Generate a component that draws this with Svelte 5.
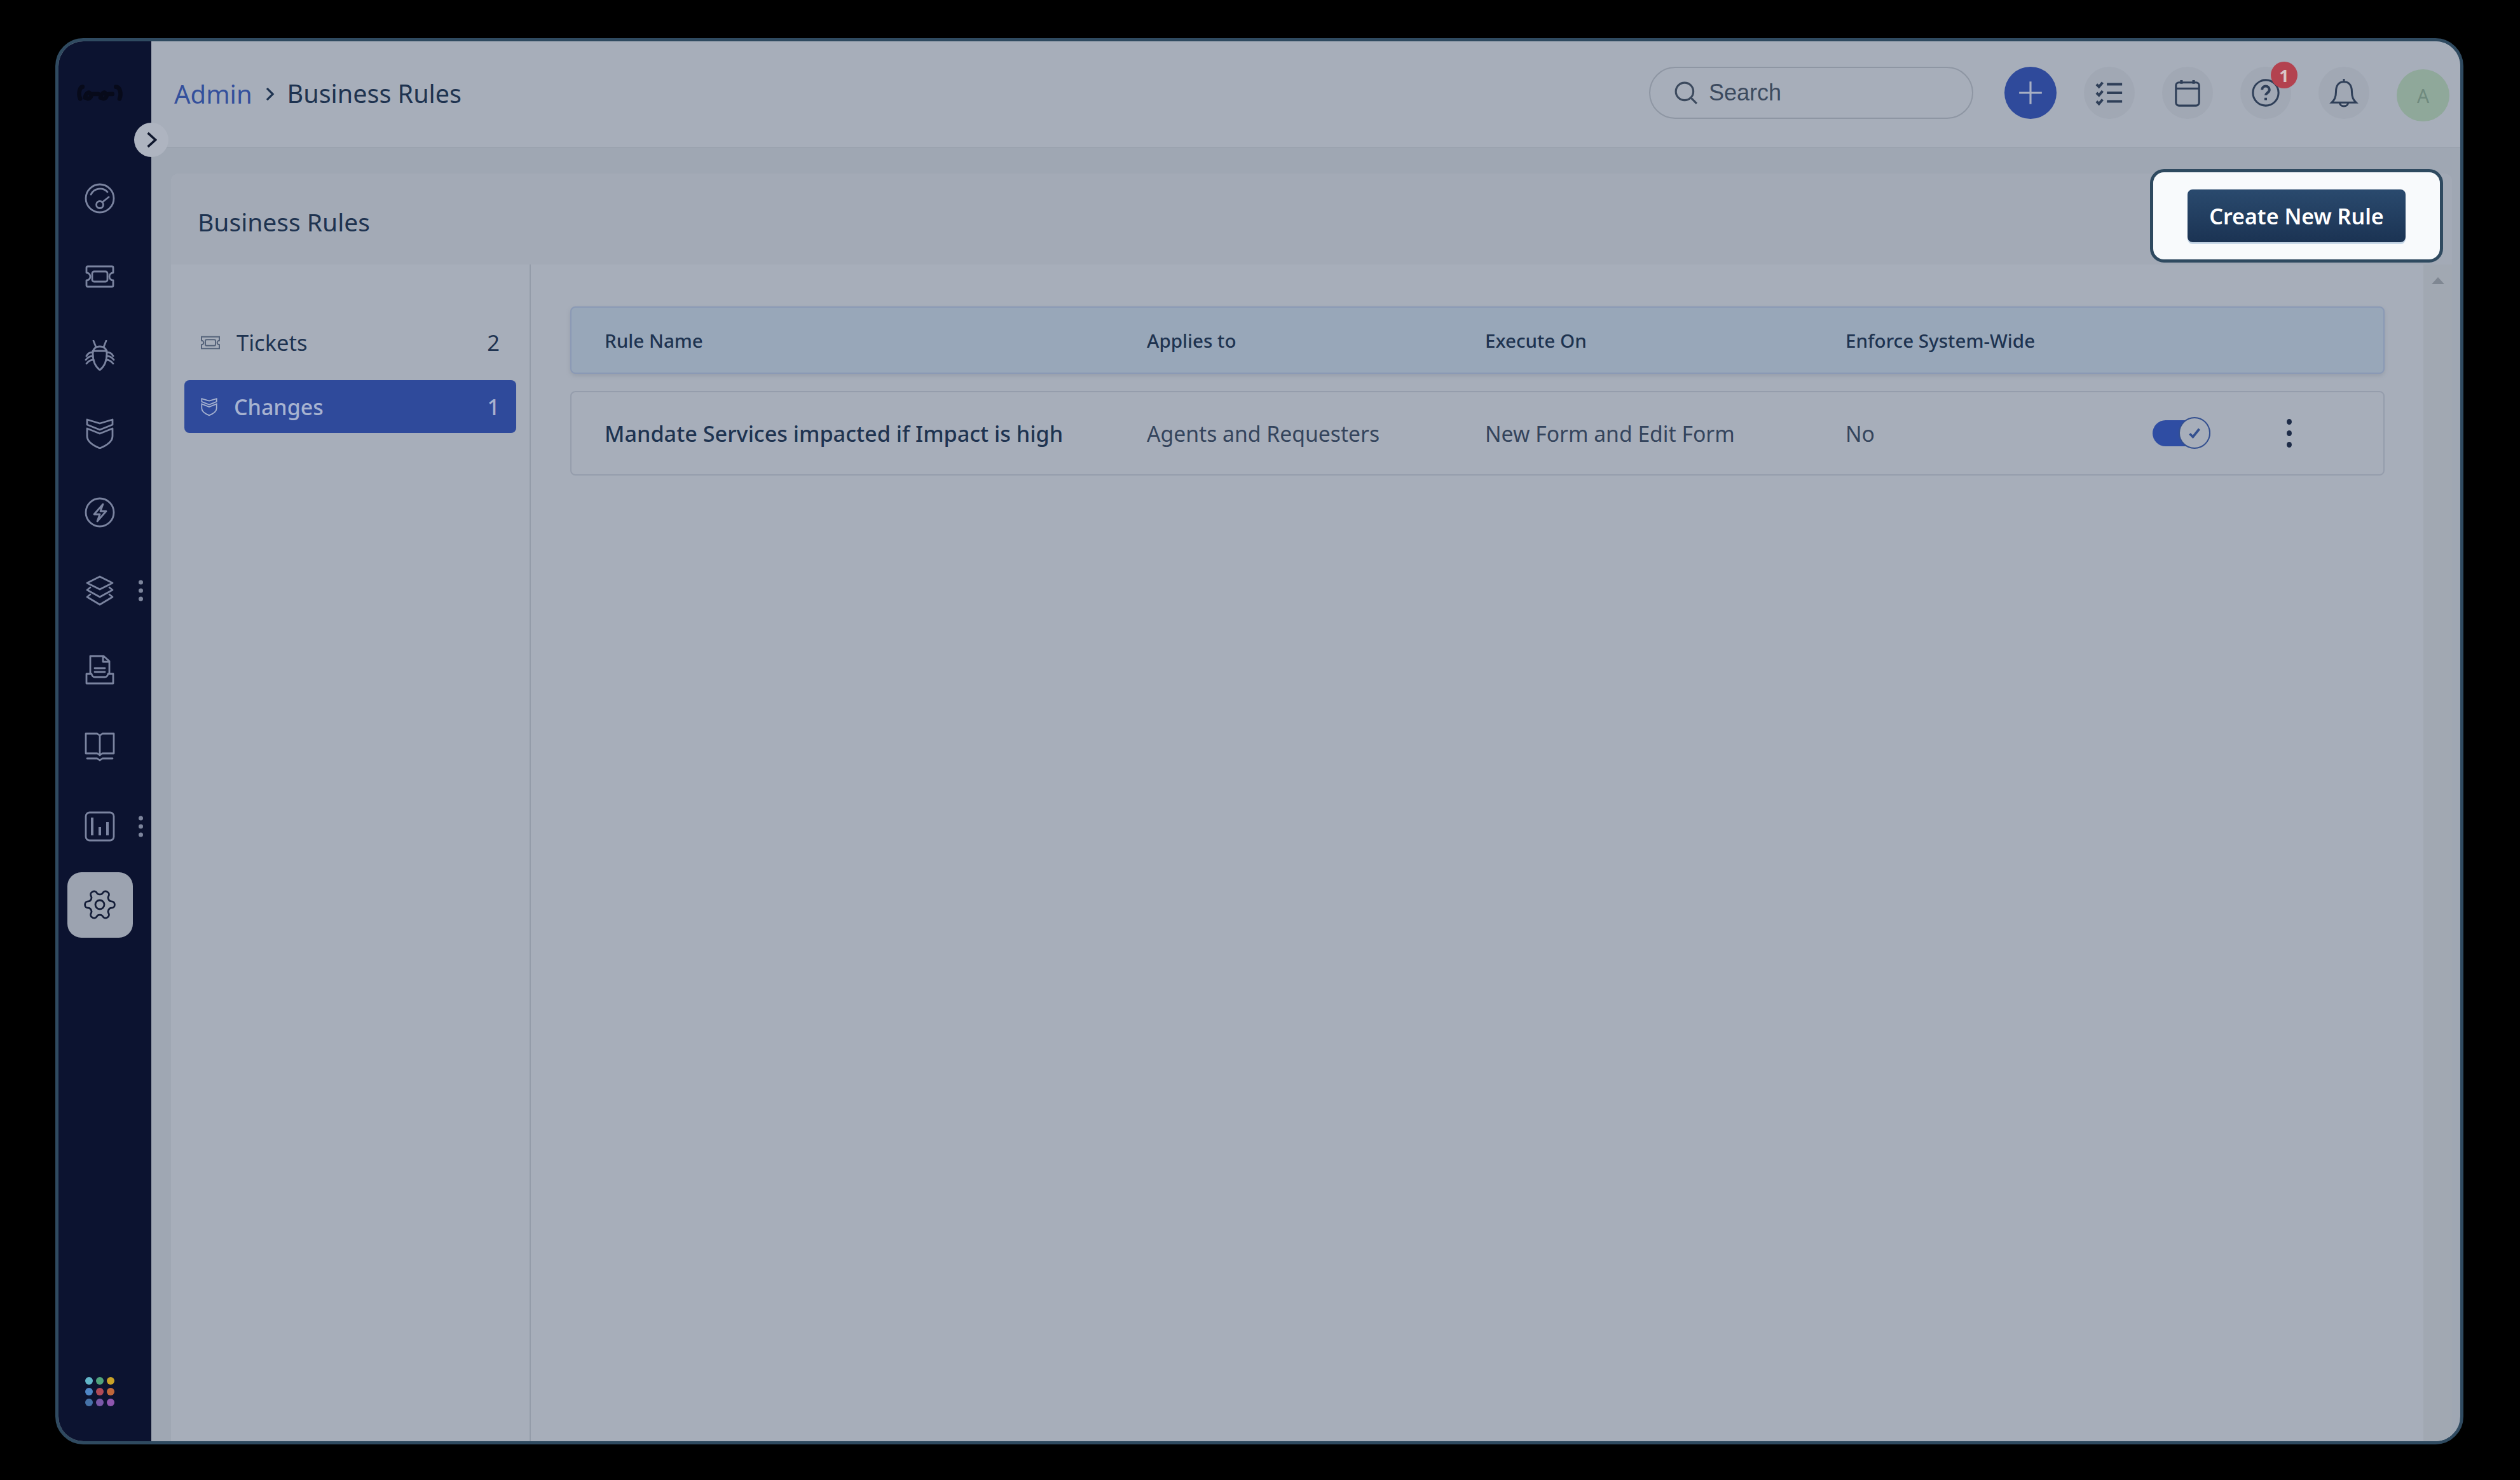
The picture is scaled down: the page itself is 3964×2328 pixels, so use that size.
<script>
  const navIcons = [
    { id: 'gauge', dots: false },
    { id: 'ticket', dots: false },
    { id: 'bug', dots: false },
    { id: 'shield', dots: false },
    { id: 'bolt', dots: false },
    { id: 'layers', dots: true },
    { id: 'inbox', dots: false },
    { id: 'book', dots: false },
    { id: 'chart', dots: true }
  ];
  const appDots = ['#62b6c9', '#4fa37c', '#c9a227', '#4f86c6', '#b04a58', '#c0673a', '#4672a8', '#7a58a8', '#8f56ae'];
  const cols = ['Rule Name', 'Applies to', 'Execute On', 'Enforce System-Wide'];
</script>

{#snippet ticketShape()}
  <path d="M5 8h38a2 2 0 0 1 2 2v8a6 6 0 0 0 0 12v8a2 2 0 0 1-2 2H5a2 2 0 0 1-2-2v-8a6 6 0 0 0 0-12v-8a2 2 0 0 1 2-2z" />
  <rect x="12" y="16" width="24" height="16" rx="3" />
{/snippet}

{#snippet shieldShape()}
  <path d="M4 2l20 6 20-6v8l-20 8-20-8z" />
  <path d="M4 16l20 8 20-8v12c0 9-10 15-20 19C14 43 4 37 4 28z" />
{/snippet}

<div class="frame">
  <aside class="sidebar">
    <div class="logo">
      <svg viewBox="0 0 80 32">
        <path d="M6 26C2 16 6 6 10 6M14 24c2-8 8-12 10-4 1 5-6 8-8 4M28 18h8M40 24c2-8 8-12 10-4 1 5-6 8-8 4M54 18h6M66 6c6 0 10 10 6 20" />
      </svg>
    </div>
    <nav class="nav">
      {#each navIcons as item}
        <div class="nav-item">
          <svg class="ico" viewBox="0 0 48 48">
            {#if item.id === 'gauge'}
              <circle cx="24" cy="24" r="22" />
              <path d="M10 18A16 16 0 0 1 36 14" />
              <circle cx="24" cy="34" r="5.5" />
              <path d="M28 30L38 22" />
            {:else if item.id === 'ticket'}
              {@render ticketShape()}
            {:else if item.id === 'bug'}
              <path d="M24 47C16 41 13 31 13 21c0-8 5-11 11-11s11 3 11 11c0 10-3 20-11 26z" />
              <path d="M13 17h22M14 1l4 10M34 1l-4 10M13 19C8 19 5 21 3 25M35 19c5 0 8 2 10 6M13 25c-5 0-8 2-11 6M35 25c5 0 8 2 11 6M14 31c-5 0-8 2-11 6M34 31c5 0 8 2 11 6" />
            {:else if item.id === 'shield'}
              {@render shieldShape()}
            {:else if item.id === 'bolt'}
              <circle cx="24" cy="24" r="22" />
              <path d="M29 11L15 27h9l-4 11 14-16h-9z" />
            {:else if item.id === 'layers'}
              <path d="M24 2l20 10-20 10L4 12z" />
              <path d="M9 19l-5 4 20 11 20-11-5-4" />
              <path d="M9 30l-5 4 20 12 20-12-5-4" />
            {:else if item.id === 'inbox'}
              <path d="M9 31V3h21l9 8v20M29 3v9h10M16 22h16M16 28h16" />
              <path d="M3 31h8c1 4 3 5 5 5h16c2 0 4-1 5-5h8v15H3z" />
            {:else if item.id === 'book'}
              <path d="M2 2h18l4 3 4-3h18v31H28l-4 3-4-3H2zM24 5v31" />
              <path d="M4 41h16l4 3 4-3h16" />
            {:else if item.id === 'chart'}
              <rect x="2" y="2" width="44" height="44" rx="6" />
              <path class="thick" d="M12 10v28M24 25v13M36 17v21" />
            {/if}
          </svg>
          {#if item.dots}
            <span class="vdots"><i></i><i></i><i></i></span>
          {/if}
        </div>
      {/each}
      <div class="nav-item">
        <div class="gear-box">
          <svg class="gear" viewBox="0 0 24 24">
            <g transform="rotate(90 12 12)">
              <path d="M12.22 2h-.44a2 2 0 0 0-2 2v.18a2 2 0 0 1-1 1.73l-.43.25a2 2 0 0 1-2 0l-.15-.08a2 2 0 0 0-2.73.73l-.22.38a2 2 0 0 0 .73 2.73l.15.1a2 2 0 0 1 1 1.72v.51a2 2 0 0 1-1 1.74l-.15.09a2 2 0 0 0-.73 2.73l.22.38a2 2 0 0 0 2.73.73l.15-.08a2 2 0 0 1 2 0l.43.25a2 2 0 0 1 1 1.73V20a2 2 0 0 0 2 2h.44a2 2 0 0 0 2-2v-.18a2 2 0 0 1 1-1.73l.43-.25a2 2 0 0 1 2 0l.15.08a2 2 0 0 0 2.73-.73l.22-.39a2 2 0 0 0-.73-2.73l-.15-.08a2 2 0 0 1-1-1.74v-.5a2 2 0 0 1 1-1.74l.15-.09a2 2 0 0 0 .73-2.73l-.22-.38a2 2 0 0 0-2.73-.73l-.15.08a2 2 0 0 1-2 0l-.43-.25a2 2 0 0 1-1-1.73V4a2 2 0 0 0-2-2z" />
              <circle cx="12" cy="12" r="3" />
            </g>
          </svg>
        </div>
      </div>
    </nav>
    <div class="apps">
      {#each appDots as c}
        <span style="background: {c}"></span>
      {/each}
    </div>
  </aside>

  <button class="collapse" aria-label="Expand">
    <svg viewBox="0 0 24 24"><path d="M7 2l11 10-11 10" /></svg>
  </button>

  <main class="main">
    <header class="topbar">
      <div class="crumbs">
        <span class="crumb-link">Admin</span>
        <svg class="crumb-sep" viewBox="0 0 16 24"><path d="M3 2l10 10-10 10" /></svg>
        <span>Business Rules</span>
      </div>
      <div class="tools">
        <div class="search">
          <svg viewBox="0 0 36 36"><circle cx="16" cy="16" r="13" /><path d="M26 26l8 8" /></svg>
          <span>Search</span>
        </div>
        <button class="plus" aria-label="Add">
          <svg viewBox="0 0 40 40"><path d="M20 3v34M3 20h34" /></svg>
        </button>
        <button class="round" aria-label="Tasks">
          <svg viewBox="0 0 48 48">
            <path class="bold" d="M3 10l4 4 6-7M3 24l4 4 6-7M3 38l4 4 6-7" />
            <path class="bold" d="M20 10h25M20 24h25M20 38h25" />
          </svg>
        </button>
        <button class="round" aria-label="Calendar">
          <svg viewBox="0 0 48 48">
            <rect x="5" y="7" width="38" height="38" rx="5" />
            <path d="M5 17h38" />
            <path class="bold" d="M14 3v6M34 3v6" />
          </svg>
        </button>
        <button class="round help" aria-label="Help">
          <svg viewBox="0 0 48 48">
            <circle cx="24" cy="24" r="21" />
            <path class="bold" d="M18 19c0-8 12-8 12 0 0 5-6 5-6 9" />
            <path class="bold" d="M24 32v4" />
          </svg>
          <span class="badge">1</span>
        </button>
        <button class="round" aria-label="Notifications">
          <svg viewBox="0 0 48 48">
            <path d="M24 1v5M24 6C14 6 11 14 11 22c0 10-3 14-7 18h40c-4-4-7-8-7-18 0-8-3-16-13-16zM17 40c0 8 14 8 14 0" />
          </svg>
        </button>
        <div class="avatar">A</div>
      </div>
    </header>

    <div class="page">
      <section class="card">
        <div class="card-head">
          <h1>Business Rules</h1>
        </div>
        <div class="card-body">
          <div class="cats">
            <div class="cat">
              <svg class="cat-ico" viewBox="0 0 48 32">
                <path d="M3 2h42v9a5 5 0 0 0 0 10v9H3v-9a5 5 0 0 0 0-10z" />
                <rect x="12" y="9" width="24" height="14" rx="3" />
              </svg>
              <span class="cat-label">Tickets</span>
              <span class="cat-count">2</span>
            </div>
            <div class="cat active">
              <svg class="cat-ico shield" viewBox="0 0 48 48">
                {@render shieldShape()}
              </svg>
              <span class="cat-label">Changes</span>
              <span class="cat-count">1</span>
            </div>
          </div>
          <div class="content">
            <div class="row thead">
              {#each cols as c}<span>{c}</span>{/each}
            </div>
            <div class="row tbody">
              <span class="rule">Mandate Services impacted if Impact is high</span>
              <span>Agents and Requesters</span>
              <span>New Form and Edit Form</span>
              <span>No</span>
              <span class="toggle">
                <span class="knob">
                  <svg viewBox="0 0 24 24"><path d="M6 13l4 4 8-10" /></svg>
                </span>
              </span>
              <span class="kebab"><i></i><i></i><i></i></span>
            </div>
          </div>
          <div class="scroll"><span class="arrow"></span></div>
        </div>
      </section>
    </div>
  </main>

  <div class="spot">
    <button class="create">Create New Rule</button>
  </div>
</div>

<style>
  :global(body) {
    margin: 0;
    background: #000;
  }
  * {
    box-sizing: border-box;
  }
  button {
    border: none;
    padding: 0;
    font: inherit;
  }
  .frame {
    position: relative;
    width: 3788px;
    height: 2212px;
    margin: 60px 0 0 87px;
    display: flex;
    border: 5px solid #2f4a60;
    border-radius: 44px;
    background: #9fa7b3;
    overflow: hidden;
    font-family: "Noto Sans", sans-serif;
    color: #1e3350;
  }
  .sidebar {
    width: 146px;
    flex: none;
    background: #0c1330;
    display: flex;
    flex-direction: column;
    align-items: stretch;
  }
  .logo {
    height: 185px;
    padding: 66px 0 0 27px;
  }
  .logo svg {
    display: block;
    width: 78px;
    height: 30px;
    fill: none;
    stroke: #070a1a;
    stroke-width: 7;
    stroke-linecap: round;
  }
  .nav {
    display: flex;
    flex-direction: column;
  }
  .nav-item {
    position: relative;
    height: 123.5px;
    display: flex;
    align-items: center;
    justify-content: center;
    padding-right: 16px;
  }
  .ico {
    width: 48px;
    height: 48px;
    fill: none;
    stroke: #7b84a0;
    stroke-width: 2.8;
    stroke-linejoin: round;
    stroke-linecap: round;
  }
  .thick {
    stroke-width: 4;
    stroke-linecap: butt;
  }
  .vdots {
    position: absolute;
    left: 126px;
    top: 50%;
    transform: translateY(-50%);
    display: flex;
    flex-direction: column;
    gap: 6px;
  }
  .vdots i {
    width: 7px;
    height: 7px;
    border-radius: 50%;
    background: #7d859c;
  }
  .gear-box {
    width: 103px;
    height: 103px;
    border-radius: 22px;
    background: #9ca3b0;
    display: flex;
    align-items: center;
    justify-content: center;
  }
  .gear {
    width: 56px;
    height: 56px;
    fill: none;
    stroke: #141d38;
    stroke-width: 1.2;
  }
  .apps {
    margin-top: auto;
    margin-bottom: 55px;
    margin-left: 42px;
    display: grid;
    grid-template-columns: repeat(3, 12px);
    gap: 5px;
  }
  .apps span {
    height: 12px;
    border-radius: 50%;
  }
  .collapse {
    position: absolute;
    left: 119px;
    top: 128px;
    width: 54px;
    height: 54px;
    border-radius: 50%;
    background: #aeb4c0;
    display: flex;
    align-items: center;
    justify-content: center;
  }
  .collapse svg {
    width: 26px;
    height: 26px;
    fill: none;
    stroke: #10182e;
    stroke-width: 3.4;
  }
  .main {
    flex: 1;
    min-width: 0;
    display: flex;
    flex-direction: column;
  }
  .topbar {
    height: 167px;
    flex: none;
    background: #a7aeba;
    border-bottom: 1px solid #979fab;
    display: flex;
    align-items: flex-start;
    justify-content: space-between;
    padding: 0 17px 0 36px;
  }
  .crumbs {
    height: 166px;
    display: flex;
    align-items: center;
    gap: 20px;
    font-size: 39.5px;
    line-height: 1;
  }
  .crumb-link {
    color: #34509c;
    font-size: 40px;
  }
  .crumb-sep {
    width: 15px;
    height: 22px;
    fill: none;
    stroke: #1e3350;
    stroke-width: 3.5;
  }
  .tools {
    display: flex;
    align-items: flex-start;
    padding-top: 40px;
  }
  .search {
    width: 510px;
    height: 82px;
    border: 2px solid #8e96a3;
    border-radius: 41px;
    display: flex;
    align-items: center;
    gap: 17px;
    padding-left: 37px;
    margin-right: 49px;
    font-family: "Liberation Sans", sans-serif;
    font-size: 36px;
    color: #3c4a5e;
  }
  .search svg {
    width: 38px;
    height: 38px;
    fill: none;
    stroke: #3c4a5e;
    stroke-width: 3;
  }
  .plus {
    width: 82px;
    height: 82px;
    border-radius: 50%;
    background: #2f4a9b;
    margin-right: 43px;
    display: flex;
    align-items: center;
    justify-content: center;
  }
  .plus svg {
    width: 42px;
    height: 42px;
    fill: none;
    stroke: #a8b0c4;
    stroke-width: 3;
  }
  .round {
    position: relative;
    width: 80px;
    height: 82px;
    border-radius: 50%;
    background: #a1a8b4;
    margin-right: 43px;
    display: flex;
    align-items: center;
    justify-content: center;
  }
  .round svg {
    width: 46px;
    height: 46px;
    fill: none;
    stroke: #2f3f58;
    stroke-width: 3.2;
  }
  .round svg .bold {
    stroke-width: 4.2;
  }
  .badge {
    position: absolute;
    left: 48px;
    top: -8px;
    width: 42px;
    height: 42px;
    border-radius: 50%;
    background: #b3424f;
    color: #d9c5c8;
    font-size: 27px;
    font-weight: 700;
    display: flex;
    align-items: center;
    justify-content: center;
  }
  .avatar {
    width: 83px;
    height: 82px;
    margin-top: 4px;
    border-radius: 50%;
    background: #8fa89a;
    color: #6f8a7e;
    font-size: 30px;
    display: flex;
    align-items: center;
    justify-content: center;
  }
  .page {
    flex: 1;
    min-height: 0;
    padding: 41px 13px 0 31px;
    display: flex;
  }
  .card {
    flex: 1;
    min-width: 0;
    background: #a7aeba;
    border-radius: 12px 12px 0 0;
    display: flex;
    flex-direction: column;
  }
  .card-head {
    height: 143px;
    flex: none;
    background: #a3aab6;
    border-radius: 12px 12px 0 0;
    display: flex;
    align-items: center;
    padding: 8px 42px 0 42px;
  }
  h1 {
    margin: 0;
    font-size: 39px;
    font-weight: 400;
    line-height: 1;
  }
  .card-body {
    flex: 1;
    min-height: 0;
    display: flex;
  }
  .cats {
    width: 566px;
    flex: none;
    border-right: 2px solid #949ca9;
    padding: 81px 21px 0;
    display: flex;
    flex-direction: column;
    gap: 18px;
  }
  .cat {
    height: 83px;
    display: flex;
    align-items: center;
    padding: 0 26px 0 25px;
    font-size: 34.5px;
    border-radius: 8px;
  }
  .cat-label {
    margin-left: 25px;
    flex: 1;
  }
  .cat-ico {
    width: 32px;
    height: 22px;
    fill: none;
    stroke: #55637a;
    stroke-width: 3;
  }
  .cat.active {
    background: #2f4a9b;
    color: #a7b3d0;
    font-weight: 500;
    font-size: 34px;
  }
  .cat-ico.shield {
    width: 28px;
    height: 32px;
    stroke: #a7b3d0;
  }
  .content {
    flex: 1;
    min-width: 0;
    padding: 66px 61px 0 62px;
    display: flex;
    flex-direction: column;
    gap: 27px;
  }
  .row {
    display: grid;
    grid-template-columns: 853px 532px 567px 483px 211px 1fr;
    align-items: center;
    padding-left: 52px;
    border-radius: 8px;
  }
  .thead {
    height: 106px;
    background: #98a7b9;
    border: 2px solid #8a99b5;
    font-size: 29.6px;
    font-weight: 500;
    box-shadow: 0 3px 6px #969eaa;
  }
  .tbody {
    height: 133px;
    border: 2px solid #959dac;
    font-size: 33.7px;
    color: #34445c;
  }
  .rule {
    font-weight: 500;
    font-size: 34.2px;
    color: #1e3350;
  }
  .toggle {
    position: relative;
    width: 91px;
    height: 41px;
    border-radius: 21px;
    background: #2f4da3;
    display: block;
  }
  .knob {
    position: absolute;
    right: 0;
    top: -5px;
    width: 50px;
    height: 50px;
    border-radius: 50%;
    background: #a7aeba;
    border: 2px solid #34508f;
    display: flex;
    align-items: center;
    justify-content: center;
  }
  .knob svg {
    width: 30px;
    height: 30px;
    fill: none;
    stroke: #34508f;
    stroke-width: 3;
  }
  .kebab {
    display: flex;
    flex-direction: column;
    gap: 9px;
    width: 9px;
  }
  .kebab i {
    width: 8px;
    height: 9px;
    border-radius: 50%;
    background: #1e2c48;
  }
  .scroll {
    width: 45px;
    flex: none;
    background: #a1a8b2;
    padding-top: 20px;
    display: flex;
    justify-content: center;
  }
  .arrow {
    width: 0;
    height: 0;
    border-left: 10px solid transparent;
    border-right: 10px solid transparent;
    border-bottom: 11px solid #7f8792;
  }
  .spot {
    position: absolute;
    left: 3290px;
    top: 201px;
    width: 461px;
    height: 147px;
    background: #f8fafc;
    border: 5px solid #2f4a60;
    border-radius: 22px;
    display: flex;
    align-items: center;
    justify-content: center;
  }
  .create {
    width: 343px;
    height: 83px;
    border-radius: 8px;
    background: linear-gradient(#2a4a6e, #1b3353);
    color: #fff;
    font-family: "Noto Sans", sans-serif;
    font-size: 34px;
    font-weight: 600;
    box-shadow: 0 3px 0 #c8d8e8;
  }
</style>
